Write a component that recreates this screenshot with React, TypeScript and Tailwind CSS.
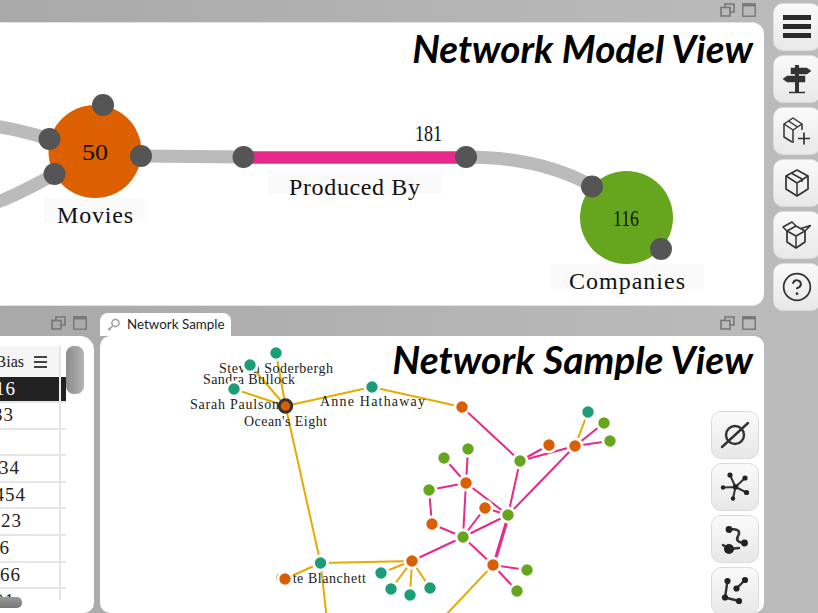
import React from 'react';

const TEAL = '#1b9e77';
const ORANGE = '#d95f02';
const GREEN = '#66a61e';
const YELLOW = '#e6ab02';
const PINK = '#e7298a';

type Pt = [number, number];

const nodes: [number, number, string][] = [
  [276, 353, TEAL], [250, 365, TEAL], [234, 389, TEAL], [372, 387, TEAL], [320.5, 563, TEAL],
  [381, 573, TEAL], [391, 589, TEAL], [410, 595, TEAL], [430, 588, TEAL], [588, 412, TEAL],
  [412, 561, ORANGE], [285, 579, ORANGE], [462, 407, ORANGE], [549, 445, ORANGE], [575, 446, ORANGE],
  [466, 483, ORANGE], [485, 508, ORANGE], [432, 524, ORANGE], [493, 565, ORANGE],
  [520, 461, GREEN], [604, 423, GREEN], [610, 441, GREEN], [444, 458, GREEN], [468, 449, GREEN],
  [429, 490, GREEN], [508, 515, GREEN], [463, 537, GREEN], [527, 570, GREEN], [517, 591, GREEN],
];

const yellowEdges: [Pt, Pt][] = [
  [[285.5, 406], [276, 353]], [[285.5, 406], [250, 365]], [[285.5, 406], [234, 389]], [[285.5, 406], [372, 387]],
  [[372, 387], [462, 407]], [[285.5, 406], [320.5, 563]], [[320.5, 563], [285, 579]], [[320.5, 563], [412, 561]],
  [[320.5, 563], [327, 620]], [[412, 561], [381, 573]], [[412, 561], [391, 589]], [[412, 561], [410, 595]],
  [[412, 561], [430, 588]], [[575, 446], [588, 412]], [[493, 565], [443, 618]],
];

const pinkEdges: [Pt, Pt][] = [
  [[462, 407], [520, 461]], [[520, 461], [549, 445]], [[520, 461], [575, 446]], [[575, 446], [604, 423]],
  [[575, 446], [610, 441]], [[575, 446], [508, 515]], [[520, 461], [508, 515]], [[466, 483], [444, 458]],
  [[466, 483], [468, 449]], [[466, 483], [429, 490]], [[466, 483], [508, 515]], [[466, 483], [463, 537]],
  [[429, 490], [432, 524]], [[432, 524], [463, 537]], [[485, 508], [463, 537]], [[485, 508], [508, 515]],
  [[508, 515], [463, 537]], [[463, 537], [412, 561]], [[463, 537], [493, 565]], [[508, 515], [493, 565]],
  [[509, 516], [494, 566]], [[493, 565], [527, 570]], [[493, 565], [517, 591]],
];

const sampleLabels: [string, number, number, number][] = [
  ['Steven Soderbergh', 219, 373, 114],
  ['Sandra Bullock', 203, 384, 92],
  ['Sarah Paulson', 190, 409, 89],
  ["Ocean's Eight", 244, 426, 83],
  ['Anne Hathaway', 320, 406, 105],
  ['Cate Blanchett', 276, 583, 90],
];

const ports: Pt[] = [[103, 105], [49.5, 139], [54.5, 174], [141, 156], [243.5, 157], [466, 157], [592, 186.5], [661, 249]];

const rows = [
  { text: '316', right: 'w-[16px]', selected: true, height: 'h-[26px]' },
  { text: '833', right: 'w-[14px]', height: 'h-[27px]' },
  { text: '', right: 'w-[12px]', height: 'h-[26px]' },
  { text: '1234', right: 'w-[20px]', height: 'h-[27px]' },
  { text: '2454', right: 'w-[26px]', height: 'h-[26px]' },
  { text: '0923', right: 'w-[22px]', height: 'h-[27px]' },
  { text: '16', right: 'w-[10px]', height: 'h-[27px]' },
  { text: '2066', right: 'w-[21px]', height: 'h-[26px]' },
  { text: '201', right: 'w-[15px]', height: 'h-[27px]' },
];

const slab = "font-['Liberation_Serif',serif]";
const title = "font-['Lato',sans-serif] font-bold italic text-black";

const WindowControls = () => (
  <div className="flex items-start gap-[7px]">
    <svg width="15" height="14" viewBox="0 0 15 14" fill="none" stroke="#777" strokeWidth="1.6">
      <path d="M5 4V1h9v8h-4" />
      <rect x="1" y="4.5" width="9" height="8.5" />
    </svg>
    <svg width="14" height="14" viewBox="0 0 14 14" fill="none" stroke="#777" strokeWidth="1.4">
      <rect x="0.8" y="0.8" width="12.4" height="12.4" />
      <path d="M1 2.2h12" strokeWidth="2.4" />
    </svg>
  </div>
);

const ToolButton = ({ children }: { children: React.ReactNode }) => (
  <div className="flex h-[48px] w-[48px] shrink-0 items-center justify-center rounded-[10px] border border-[#dcdcdc] bg-gradient-to-b from-[#fafafa] to-[#e8e8e8]">
    {children}
  </div>
);

const Icon = ({ children, fill = 'none' }: { children: React.ReactNode; fill?: string }) => (
  <svg width="32" height="32" viewBox="0 0 32 32" fill={fill} stroke="#333" strokeWidth="1.5" strokeLinejoin="round">
    {children}
  </svg>
);

const Dot = ({ x, y, r = 2.6 }: { x: number; y: number; r?: number }) => (
  <circle cx={x} cy={y} r={r} fill="#222" stroke="none" />
);

const ModelGraph = () => (
  <svg className="absolute inset-0" width="764" height="284" viewBox="0 23 764 284">
    <g fill="none" stroke="#bbb" strokeWidth="13">
      <path d="M-5 126 C15 129 30 133 50 139" />
      <path d="M-5 203 C15 196 35 185 55 174" />
      <path d="M141 156 L244 157" />
      <path d="M466 157 C520 157 560 168 592 186" />
    </g>
    <path d="M243 157.5 H466" stroke={PINK} strokeWidth="12.5" />
    <circle cx="95" cy="151.5" r="46.5" fill="#dc6000" />
    <circle cx="626.5" cy="217.5" r="46.5" fill={GREEN} />
    <rect x="44" y="198" width="101" height="24" fill="#fafafa" />
    <rect x="268" y="170" width="174" height="24" fill="#fafafa" />
    <rect x="550" y="264" width="154" height="25" fill="#fafafa" />
    {ports.map(([x, y]) => (
      <circle key={`${x}-${y}`} cx={x} cy={y} r="11" fill="#555" />
    ))}
    <g className={slab} fontSize="24" fill="#111">
      <text x="57" y="223" textLength="76">Movies</text>
      <text x="289" y="195" textLength="131">Produced By</text>
      <text x="569" y="289" textLength="116">Companies</text>
      <text x="82" y="160" textLength="26" lengthAdjust="spacingAndGlyphs">50</text>
      <text x="415" y="141" textLength="27" lengthAdjust="spacingAndGlyphs">181</text>
      <text x="613" y="226" textLength="26" lengthAdjust="spacingAndGlyphs">116</text>
    </g>
  </svg>
);

const SampleGraph = () => (
  <svg className="absolute inset-0" width="664" height="277" viewBox="100 336 664 277">
    <g strokeWidth="2" fill="none">
      {yellowEdges.map(([a, b], i) => (
        <line key={i} x1={a[0]} y1={a[1]} x2={b[0]} y2={b[1]} stroke={YELLOW} />
      ))}
      {pinkEdges.map(([a, b], i) => (
        <line key={i} x1={a[0]} y1={a[1]} x2={b[0]} y2={b[1]} stroke={PINK} />
      ))}
    </g>
    <g className={slab} fontSize="14" fill="#222">
      {sampleLabels.map(([name, x, y, w]) => (
        <text key={name} x={x} y={y} textLength={w}>{name}</text>
      ))}
    </g>
    {nodes.map(([x, y, color]) => (
      <g key={`${x}-${y}`}>
        <circle cx={x} cy={y} r="8.5" fill="#fff" />
        <circle cx={x} cy={y} r="5.7" fill={color} />
      </g>
    ))}
    <circle cx="285.5" cy="406" r="6.2" fill={ORANGE} stroke="#333" strokeWidth="3" />
  </svg>
);

const DataTable = () => (
  <div className={`flex h-[254px] w-[66px] shrink-0 flex-col overflow-hidden text-[#222] ${slab}`}>
    <div className="flex h-[31px] w-[61px] shrink-0 items-center justify-end gap-[10px] border-r-2 border-[#e4e4e4] bg-[#f5f5f5] pr-[12px] text-[16px]">
      <span className="flex w-[16px] justify-end whitespace-nowrap">Bias</span>
      <svg width="13" height="12" viewBox="0 0 13 12" fill="#444">
        <rect y="0" width="13" height="2" />
        <rect y="5" width="13" height="2" />
        <rect y="10" width="13" height="2" />
      </svg>
    </div>
    {rows.map((row, i) => (
      <div key={i} className={`flex ${row.height} shrink-0 border-b-2 border-[#e6e6e6] ${row.selected ? 'bg-[#222] text-white' : ''}`}>
        <div className={`flex h-full w-[61px] items-center border-r-2 ${row.selected ? 'border-[#eee]' : 'border-[#e4e4e4]'} text-[19px] tracking-[1px]`}>
          <span className={`flex ${row.right} justify-end whitespace-nowrap`}>{row.text}</span>
        </div>
      </div>
    ))}
  </div>
);

export default function App() {
  return (
    <div className="flex h-[613px] w-[818px] overflow-hidden bg-[#bbb]">
      <div className="flex h-full w-[764px] shrink-0 flex-col bg-gradient-to-r from-[#a9a9a9] to-[#bbb]">
        <div className="flex h-[22px] shrink-0 justify-end pt-[3px] pr-[8px]">
          <WindowControls />
        </div>

        {/* Network model */}
        <section className="relative h-[284px] shrink-0 overflow-hidden rounded-r-[12px] border-y border-[#e2e2e2] bg-white">
          <ModelGraph />
          <h1 className={`absolute top-[1px] right-[11px] text-[38.6px] leading-[48px] whitespace-nowrap ${title}`}>Network Model View</h1>
        </section>

        <div className="flex min-h-0 flex-1 gap-[6px]">
          {/* Table */}
          <div className="flex w-[94px] shrink-0 flex-col">
            <div className="flex h-[30px] shrink-0 items-start justify-end pt-[10px] pr-[7px]">
              <WindowControls />
            </div>
            <div className="relative flex min-h-0 flex-1 items-start overflow-hidden rounded-tr-[14px] rounded-br-[10px] bg-white pt-[10px]">
              <DataTable />
              <div className="h-[48px] w-[18px] rounded-[8px] bg-gradient-to-r from-[#8c8c8c] via-[#a0a0a0] to-[#b4b4b4]" />
              <div className="absolute bottom-[5px] left-0 h-[11px] w-[22px] rounded-r-[5px] bg-gradient-to-b from-[#999] to-[#777]" />
            </div>
          </div>

          {/* Network sample */}
          <div className="flex min-w-0 flex-1 flex-col">
            <div className="flex h-[30px] shrink-0 items-end justify-between pr-[8px]">
              <div className="flex h-[23px] w-[131px] items-center gap-[6px] rounded-t-[8px] bg-white pl-[7px]">
                <svg width="14" height="14" viewBox="0 0 14 14" fill="none" stroke="#a5a5a5" strokeWidth="1.6">
                  <circle cx="8.5" cy="5" r="3.6" />
                  <path d="M5.8 7.8L3 10.5" />
                  <circle cx="2.5" cy="11" r="1.6" fill="#a5a5a5" stroke="none" />
                </svg>
                <span className="font-['Lato',sans-serif] text-[13.4px] whitespace-nowrap text-[#222]">Network Sample</span>
              </div>
              <div className="self-start pt-[10px]">
                <WindowControls />
              </div>
            </div>
            <section className="relative min-h-0 flex-1 overflow-hidden rounded-t-[10px] rounded-b-[10px] bg-white">
              <SampleGraph />
              <h2 className={`absolute top-[-1px] right-[11px] text-[38.9px] leading-[48px] whitespace-nowrap ${title}`}>Network Sample View</h2>
              <div className="absolute top-[75px] right-[5px] flex flex-col gap-[4px]">
                <ToolButton>
                  <Icon>
                    <circle cx="16" cy="16" r="9" strokeWidth="2.4" />
                    <path d="M3 28L29 4" strokeWidth="2.4" strokeLinecap="round" />
                  </Icon>
                </ToolButton>
                <ToolButton>
                  <Icon>
                    <path d="M11 4L16.5 16L26 7M16.5 16L27.5 21.5M16.5 16L14 27.5M16.5 16L4 16.5" strokeWidth="2" />
                    <Dot x={16.5} y={16} r={2.8} />
                    <Dot x={11} y={4} />
                    <Dot x={26} y={7} />
                    <Dot x={27.5} y={21.5} />
                    <Dot x={14} y={27.5} r={2.2} />
                    <Dot x={4} y={16.5} r={2.2} />
                  </Icon>
                </ToolButton>
                <ToolButton>
                  <Icon>
                    <path d="M11 6.5C15 6 19 6 20 9C21 13 16 14 19 18C20.5 20 23 19.5 26 20" strokeWidth="2.6" strokeLinecap="round" />
                    <path d="M4 22L10 26L20 25" strokeWidth="2.4" strokeLinecap="round" />
                    <Dot x={10} y={6.5} r={3.4} />
                    <Dot x={25.5} y={20} r={3.4} />
                    <Dot x={10} y={26} r={5} />
                  </Icon>
                </ToolButton>
                <ToolButton>
                  <Icon>
                    <path d="M8.5 6L6 22.5L20 26M26 5L17.5 13.5" strokeWidth="2.4" />
                    <Dot x={8.5} y={6} r={3.1} />
                    <Dot x={6} y={22.5} r={3.1} />
                    <Dot x={20} y={26} r={3.1} />
                    <Dot x={26} y={5} r={3.1} />
                    <Dot x={17.5} y={13.5} r={3.1} />
                  </Icon>
                </ToolButton>
              </div>
            </section>
          </div>
        </div>
      </div>

      {/* Main toolbar */}
      <div className="flex shrink-0 flex-col gap-[4px] pt-[3px] pl-[9px]">
        <ToolButton>
          <svg width="28" height="24" viewBox="0 0 28 24" fill="#2a2a2a">
            <rect y="0" width="28" height="5" />
            <rect y="9" width="28" height="5" />
            <rect y="18" width="28" height="5" />
          </svg>
        </ToolButton>
        <ToolButton>
          <Icon fill="#333">
            <path d="M10 5H26L30 8L26 11H10Z" strokeWidth="0.5" />
            <path d="M6 13H24V19H6L2 16Z" strokeWidth="0.5" />
            <rect x="14" y="2" width="4" height="27" stroke="none" />
            <path d="M8 29.5H24" />
          </Icon>
        </ToolButton>
        <ToolButton>
          <Icon>
            <path d="M11 27L3 22V9L12 3L21 9V15" />
            <path d="M3 9L12 15V28M12 15L21 9M7.5 6L16.5 12" />
            <path d="M17 23.5H29M23 17.5V29.5" strokeWidth="1.7" />
          </Icon>
        </ToolButton>
        <ToolButton>
          <Icon>
            <path d="M16 3L27 9V22L16 29L5 22V9Z" strokeWidth="1.7" />
            <path d="M5 9L16 16L27 9M16 16V29M10 6L21 12V15" strokeWidth="1.5" />
          </Icon>
        </ToolButton>
        <ToolButton>
          <Icon>
            <path d="M6 12V23L15 29L24 23V12" strokeWidth="1.7" />
            <path d="M6 12L15 7L24 12L15 17ZM15 17V29" />
            <path d="M6 12L2 8L11 3L15 7M24 12L29.5 6.5L20 9.5" />
          </Icon>
        </ToolButton>
        <ToolButton>
          <svg width="32" height="32" viewBox="0 0 24 24" fill="none" stroke="#333" strokeWidth="1.3" strokeLinecap="round">
            <circle cx="12" cy="12" r="10" />
            <path d="M9.09 9a3 3 0 0 1 5.83 1c0 2-3 3-3 3" strokeWidth="1.5" />
            <path d="M12 17h.01" strokeWidth="2" />
          </svg>
        </ToolButton>
      </div>
    </div>
  );
}
